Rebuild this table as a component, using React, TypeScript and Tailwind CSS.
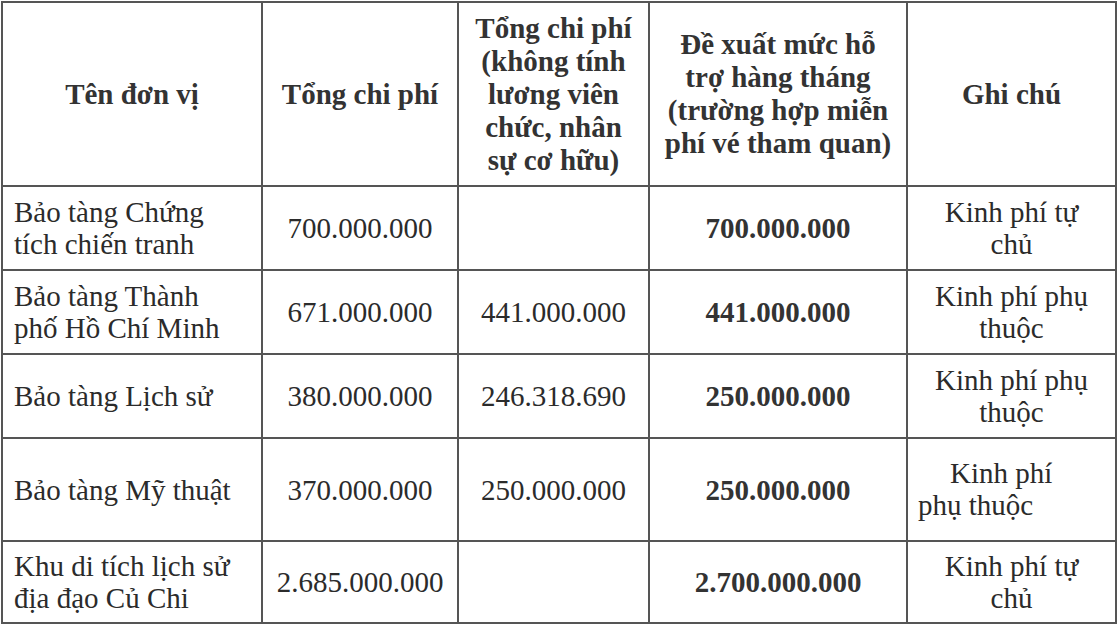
const rows = [
  {
    name: ["Bảo tàng Chứng", "tích chiến tranh"],
    total: "700.000.000",
    noSalary: "",
    proposed: "700.000.000",
    note: ["Kinh phí tự", "chủ"],
    h: "h-[84px]",
  },
  {
    name: ["Bảo tàng Thành", "phố Hồ Chí Minh"],
    total: "671.000.000",
    noSalary: "441.000.000",
    proposed: "441.000.000",
    note: ["Kinh phí phụ", "thuộc"],
    h: "h-[84px]",
  },
  {
    name: ["Bảo tàng Lịch sử"],
    total: "380.000.000",
    noSalary: "246.318.690",
    proposed: "250.000.000",
    note: ["Kinh phí phụ", "thuộc"],
    h: "h-[84px]",
  },
  {
    name: ["Bảo tàng Mỹ thuật"],
    total: "370.000.000",
    noSalary: "250.000.000",
    proposed: "250.000.000",
    note: null,
    h: "h-[103px]",
  },
  {
    name: ["Khu di tích lịch sử", "địa đạo Củ Chi"],
    total: "2.685.000.000",
    noSalary: "",
    proposed: "2.700.000.000",
    note: ["Kinh phí tự", "chủ"],
    h: "h-[82px]",
  },
];

function Lines({ lines }: { lines: string[] }) {
  return (
    <>
      {lines.map((l, i) => (
        <div key={i}>{l}</div>
      ))}
    </>
  );
}

const cell = "border-2 border-[#555] p-0 align-middle";

export default function App() {
  return (
    <div className="w-[1118px] h-[627px] bg-white pt-px pl-px font-['Liberation_Serif','Times_New_Roman',serif] text-[29px] text-[#2b2b2b]">
      <table className="table-fixed border-collapse w-[1114px]">
        <colgroup>
          <col className="w-[260px]" />
          <col className="w-[196px]" />
          <col className="w-[191px]" />
          <col className="w-[258px]" />
          <col className="w-[209px]" />
        </colgroup>
        <thead>
          <tr className="h-[184px] font-bold leading-[33px] text-center text-[#333]">
            <th className={`${cell} font-bold`}>Tên đơn vị</th>
            <th className={`${cell} font-bold`}>Tổng chi phí</th>
            <th className={`${cell} font-bold`}>
              <Lines
                lines={[
                  "Tổng chi phí",
                  "(không tính",
                  "lương viên",
                  "chức, nhân",
                  "sự cơ hữu)",
                ]}
              />
            </th>
            <th className={`${cell} font-bold`}>
              <Lines
                lines={[
                  "Đề xuất mức hỗ",
                  "trợ hàng tháng",
                  "(trường hợp miễn",
                  "phí vé tham quan)",
                ]}
              />
            </th>
            <th className={`${cell} font-bold`}>Ghi chú</th>
          </tr>
        </thead>
        <tbody className="leading-[32px]">
          {rows.map((r, i) => (
            <tr key={i} className={r.h}>
              <td className={`${cell} pl-[11px]`}>
                <Lines lines={r.name} />
              </td>
              <td className={`${cell} text-center`}>{r.total}</td>
              <td className={`${cell} text-center`}>{r.noSalary}</td>
              <td className={`${cell} text-center font-bold text-[#333]`}>
                {r.proposed}
              </td>
              {r.note ? (
                <td className={`${cell} text-center`}>
                  <Lines lines={r.note} />
                </td>
              ) : (
                <td className={`${cell} align-bottom pl-[10px] pb-px`}>
                  <div className="pl-[32px]">Kinh phí</div>
                  <div>phụ thuộc</div>
                </td>
              )}
            </tr>
          ))}
        </tbody>
      </table>
    </div>
  );
}
